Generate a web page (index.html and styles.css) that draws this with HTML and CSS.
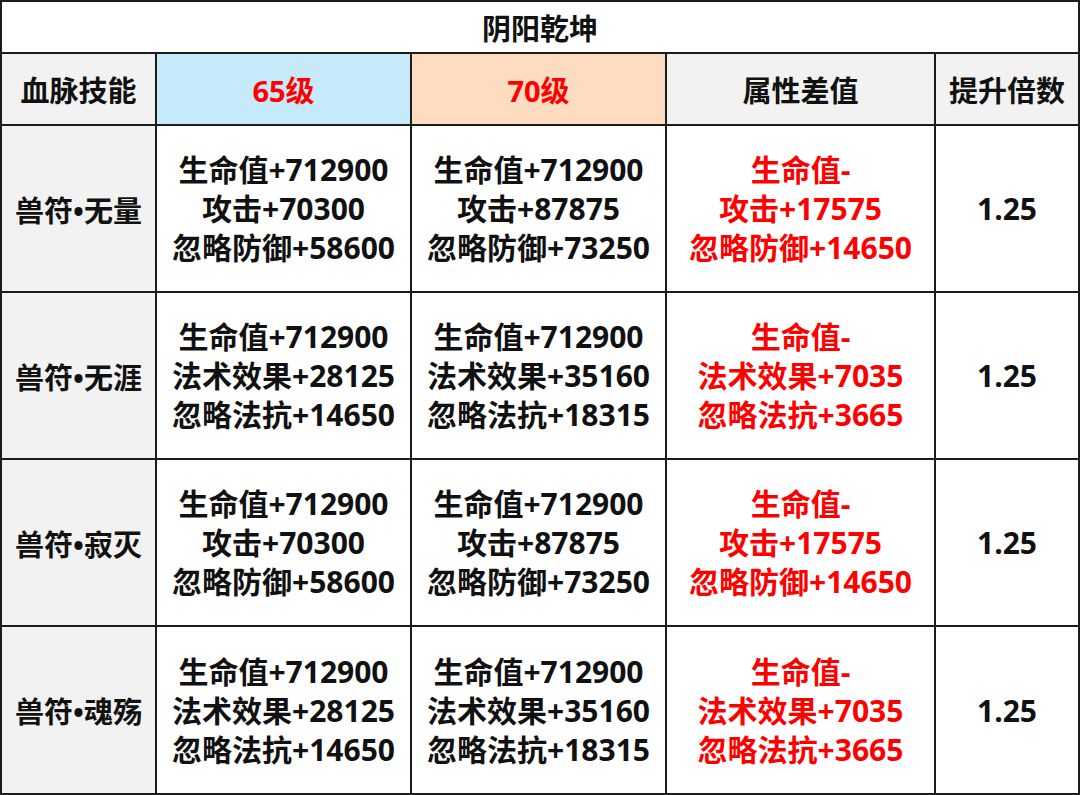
FILE: index.html
```html
<!DOCTYPE html>
<html lang="zh">
<head>
<meta charset="utf-8">
<link rel="stylesheet" href="styles.css">
</head>
<body>
<div class="grid">
  <div class="cell title">阴阳乾坤</div>

  <div class="cell head grey">血脉技能</div>
  <div class="cell head blue red">65级</div>
  <div class="cell head peach red">70级</div>
  <div class="cell head grey">属性差值</div>
  <div class="cell head grey">提升倍数</div>

  <div class="cell name">兽符•无量</div>
  <div class="cell data">生命值+712900<br>攻击+70300<br>忽略防御+58600</div>
  <div class="cell data">生命值+712900<br>攻击+87875<br>忽略防御+73250</div>
  <div class="cell data red">生命值-<br>攻击+17575<br>忽略防御+14650</div>
  <div class="cell data">1.25</div>

  <div class="cell name">兽符•无涯</div>
  <div class="cell data">生命值+712900<br>法术效果+28125<br>忽略法抗+14650</div>
  <div class="cell data">生命值+712900<br>法术效果+35160<br>忽略法抗+18315</div>
  <div class="cell data red">生命值-<br>法术效果+7035<br>忽略法抗+3665</div>
  <div class="cell data">1.25</div>

  <div class="cell name">兽符•寂灭</div>
  <div class="cell data">生命值+712900<br>攻击+70300<br>忽略防御+58600</div>
  <div class="cell data">生命值+712900<br>攻击+87875<br>忽略防御+73250</div>
  <div class="cell data red">生命值-<br>攻击+17575<br>忽略防御+14650</div>
  <div class="cell data">1.25</div>

  <div class="cell name">兽符•魂殇</div>
  <div class="cell data">生命值+712900<br>法术效果+28125<br>忽略法抗+14650</div>
  <div class="cell data">生命值+712900<br>法术效果+35160<br>忽略法抗+18315</div>
  <div class="cell data red">生命值-<br>法术效果+7035<br>忽略法抗+3665</div>
  <div class="cell data">1.25</div>
</div>
</body>
</html>
```
FILE: styles.css
```css
html, body {
  margin: 0;
  padding: 0;
  background: #ffffff;
}
.grid {
  width: 1080px;
  height: 795px;
  box-sizing: border-box;
  display: grid;
  grid-template-columns: 153px 253px 253px 267px 142px;
  grid-template-rows: 50px 70px 165px 165px 165px 166px;
  gap: 2px;
  padding: 2px;
  background: #1c1c1c;
  font-family: "Open Sans", "Noto Sans CJK SC", sans-serif;
  font-weight: 700;
  color: #111111;
}
.cell {
  background: #ffffff;
  display: flex;
  align-items: center;
  justify-content: center;
  text-align: center;
}
.title {
  grid-column: 1 / -1;
  font-size: 29px;
}
.head {
  font-size: 29px;
}
.grey { background: #f2f2f2; }
.blue { background: #c7eafb; }
.peach { background: #fddcc2; }
.red { color: #ff0000; }
.name {
  background: #f2f2f2;
  font-size: 29px;
}
.data {
  font-size: 30px;
  line-height: 39px;
}
```
